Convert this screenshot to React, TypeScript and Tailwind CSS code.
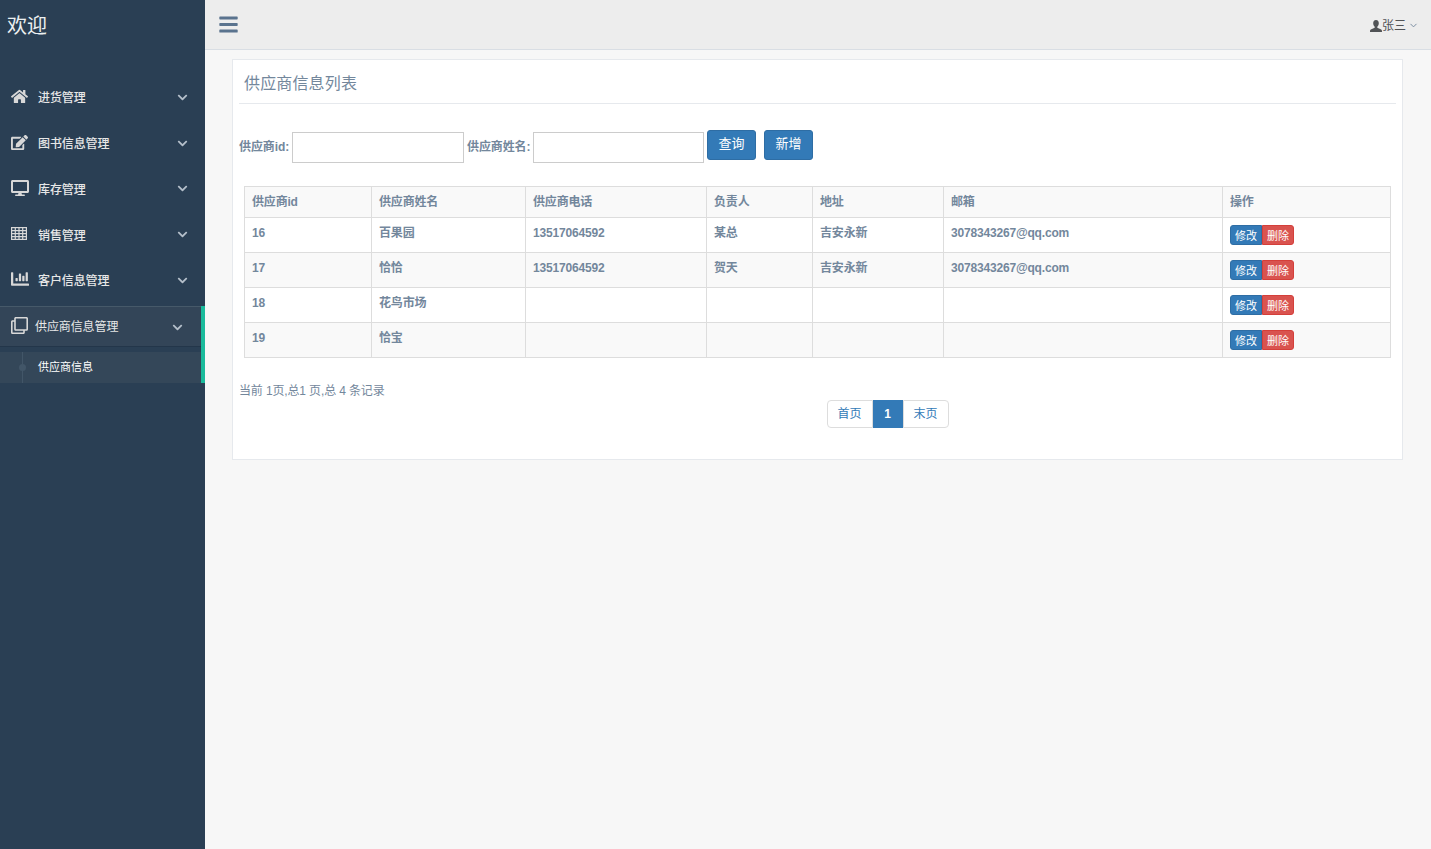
import { FaHome, FaEdit, FaDesktop, FaChartBar, FaChevronDown, FaRegClone, FaBars } from "react-icons/fa";
import { ChevronDown } from "lucide-react";

const FONT = "[font-family:'Liberation_Sans','Noto_Sans_CJK_SC',sans-serif]";

function TableIcon() {
  return (
    <svg width="16" height="13" viewBox="0 0 16 13" fill="none" stroke="currentColor" strokeWidth="1.2">
      <rect x="0.6" y="0.6" width="14.8" height="11.8" fill="none" />
      <path d="M0 3.6h16M0 6.6h16M0 9.6h16M4.3 0v13M8 0v13M11.7 0v13" />
    </svg>
  );
}

function UserIcon() {
  return (
    <svg width="12" height="12" viewBox="0 0 12 12" fill="currentColor">
      <path d="M6 0C4 0 3.2 1.5 3.2 3.2c0 1.5.6 2.8 1.5 3.5v1L.8 9.6C0 10 0 11 0 12h12c0-1 0-2-.8-2.4l-3.9-1.9v-1c.9-.7 1.5-2 1.5-3.5C8.8 1.5 8 0 6 0z" />
    </svg>
  );
}

const menus = [
  { label: "进货管理", icon: <FaHome size={17} /> },
  { label: "图书信息管理", icon: <FaEdit size={17} /> },
  { label: "库存管理", icon: <FaDesktop size={18} /> },
  { label: "销售管理", icon: <TableIcon /> },
  { label: "客户信息管理", icon: <FaChartBar size={18} /> },
];

const heads = ["供应商id", "供应商姓名", "供应商电话", "负责人", "地址", "邮箱", "操作"];

const rows = [
  ["16", "百果园", "13517064592", "某总", "吉安永新", "3078343267@qq.com"],
  ["17", "恰恰", "13517064592", "贺天", "吉安永新", "3078343267@qq.com"],
  ["18", "花鸟市场", "", "", "", ""],
  ["19", "恰宝", "", "", "", ""],
];

function Sidebar() {
  return (
    <aside className="w-[205px] shrink-0 bg-[#2a3f54] text-[#e7e7e7]">
      <div className="h-[50px] pl-[7px] pt-[11px] text-[20px] leading-[30px] text-[#ecf0f1]">欢迎</div>
      <nav className="pt-[25.5px]">
        {menus.map((m) => (
          <div key={m.label} className="flex h-[45.75px] items-center pl-[11px] pr-[17px] text-[12px] font-medium tracking-[-0.1px]">
            <span className="flex w-[27px] -translate-y-[2px] items-center text-[#d8d8d8]">{m.icon}</span>
            <span className="flex-1">{m.label}</span>
            <FaChevronDown size={11} className="-translate-y-[1px] text-[#b4bfca]" />
          </div>
        ))}
        <div className="mt-[1.5px] border-r-[4px] border-[#1abb9c]">
          <div className="flex h-[41px] items-center border-t border-b border-t-[#465969] border-b-[#23364a] bg-[#334558] pl-[11px] pr-[18px] pt-[2px] text-[12px] tracking-[-0.1px]">
            <span className="flex w-[24px] -translate-y-[2px] items-center text-[#d8d8d8]"><FaRegClone size={17} /></span>
            <span className="flex-1">供应商信息管理</span>
            <FaChevronDown size={11} className="text-[#b4bfca]" />
          </div>
          <div className="h-[5px]" />
          <div className="relative flex h-[31px] items-center bg-[#344759] pl-[38px] text-[11px] text-white">
            <span className="absolute left-[22px] top-0 h-full w-px bg-[#425668]" />
            <span className="absolute left-[19px] top-[12px] h-[7px] w-[7px] rounded-full bg-[#425668]" />
            供应商信息
          </div>
        </div>
      </nav>
    </aside>
  );
}

function TopBar() {
  return (
    <header className="flex h-[50px] items-center justify-between border-b border-[#d9dee4] bg-[#ededed] pl-[13px] pr-[13px]">
      <FaBars size={21} className="text-[#5a738e]" />
      <div className="flex translate-x-px items-center pt-[2px] text-[12px] text-[#515356]">
        <UserIcon />
        <span>张三</span>
        <ChevronDown size={11} strokeWidth={2} className="ml-[2px] text-[#73879c]" />
      </div>
    </header>
  );
}

function Field({ label, labelWidth, width }: { label: string; labelWidth: string; width: string }) {
  return (
    <div className="flex items-center">
      <label className={`-translate-y-[1px] whitespace-nowrap text-[12px] font-bold tracking-[-0.1px] ${labelWidth}`}>{label}</label>
      <input className={`h-[31px] border border-[#ccc] bg-white ${width}`} />
    </div>
  );
}

function SearchForm() {
  return (
    <div className="flex items-start pl-[6px] pt-[26px]">
      <div className="mt-[2px]">
        <Field label="供应商id:" labelWidth="w-[53px]" width="w-[172px]" />
      </div>
      <div className="ml-[3px] mt-[2px]">
        <Field label="供应商姓名:" labelWidth="w-[66px]" width="w-[171px]" />
      </div>
      <button className="ml-[3px] h-[30px] w-[49px] rounded-[3px] border border-[#2e6da4] bg-[#337ab7] pb-[2px] text-[13px] text-white">查询</button>
      <button className="ml-[8px] h-[30px] w-[49px] rounded-[3px] border border-[#2e6da4] bg-[#337ab7] pb-[2px] text-[13px] text-white">新增</button>
    </div>
  );
}

function SupplierTable() {
  const cell = "border border-[#ddd] px-[7px]";
  return (
    <table className="ml-[11px] mt-[23px] w-[1146px] table-fixed border-collapse text-[12px] font-bold tracking-[-0.18px]">
      <colgroup>
        <col className="w-[127px]" />
        <col className="w-[154px]" />
        <col className="w-[181px]" />
        <col className="w-[106px]" />
        <col className="w-[131px]" />
        <col className="w-[279px]" />
        <col className="w-[168px]" />
      </colgroup>
      <thead>
        <tr className="h-[31px] bg-[#f9f9f9]">
          {heads.map((h) => (
            <th key={h} className={`${cell} text-left align-middle font-bold`}>{h}</th>
          ))}
        </tr>
      </thead>
      <tbody>
        {rows.map((r, i) => (
          <tr key={r[0]} className={`h-[35px] ${i % 2 === 0 ? "bg-white" : "bg-[#f9f9f9]"}`}>
            {r.map((v, j) => (
              <td key={j} className={`${cell} pt-[6px] align-top`}>{v}</td>
            ))}
            <td className={`${cell} pt-[7px] align-top`}>
              <div className="flex h-[20px] w-[64px] text-[11px] font-normal leading-[18px] tracking-normal text-white">
                <span className="w-[32px] rounded-l-[3px] border border-[#2e6da4] bg-[#337ab7] pt-px text-center">修改</span>
                <span className="w-[32px] rounded-r-[3px] border border-[#d43f3a] bg-[#d9534f] pt-px text-center">删除</span>
              </div>
            </td>
          </tr>
        ))}
      </tbody>
    </table>
  );
}

function Pager() {
  return (
    <div className="flex justify-center pl-[140px] text-[12px]">
      <div className="flex h-[28px] text-[#337ab7]">
        <span className="flex w-[46px] items-center justify-center rounded-l-[4px] border border-[#ddd] bg-white">首页</span>
        <span className="flex w-[30px] items-center justify-center border border-[#337ab7] bg-[#337ab7] font-bold text-white">1</span>
        <span className="flex w-[46px] items-center justify-center rounded-r-[4px] border border-[#ddd] bg-white">末页</span>
      </div>
    </div>
  );
}

export default function App() {
  return (
    <div className={`flex h-[849px] bg-[#f7f7f7] text-[#73879c] ${FONT}`}>
      <Sidebar />
      <main className="flex-1">
        <TopBar />
        <section className="ml-[27px] mr-[28px] mt-[9px] h-[401px] border border-[#e6e9ed] bg-white">
          <div className="mx-[6px] h-[44px] border-b border-[#e6e9ed] pl-[5px] pt-[12px] text-[16px] leading-[24px] tracking-[0.15px]">供应商信息列表</div>
          <SearchForm />
          <SupplierTable />
          <p className="ml-[6px] mt-[25px] text-[12px] leading-[17px] tracking-[-0.14px]">当前 1页,总1 页,总 4 条记录</p>
          <Pager />
        </section>
      </main>
    </div>
  );
}
